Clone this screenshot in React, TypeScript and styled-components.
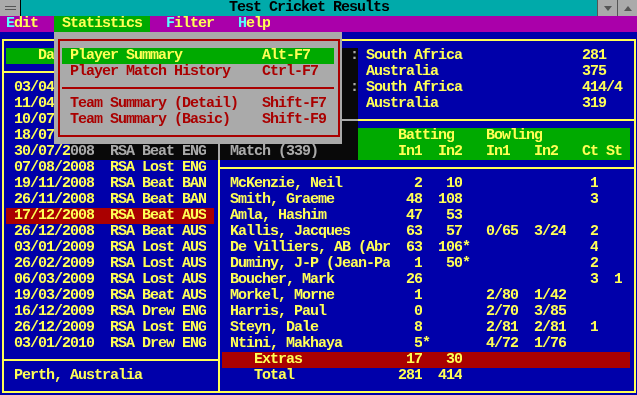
import React from "react";
import styled, { createGlobalStyle } from "styled-components";

const CW = 8;
const CH = 16;

const C = {
  blue: "#0000aa",
  yellow: "#ffff55",
  green: "#00aa00",
  red: "#aa0000",
  magenta: "#aa00aa",
  cyan: "#00aaaa",
  lcyan: "#55ffff",
  gray: "#aaaaaa",
  dark: "#555555",
};

const Global = createGlobalStyle`
  html, body { margin: 0; padding: 0; background: ${C.blue}; overflow: hidden; }
  * { box-sizing: border-box; }
`;

const Window = styled.div`
  position: relative;
  width: 637px;
  height: 395px;
  overflow: hidden;
  background: ${C.blue};
  font-family: "Liberation Mono", "DejaVu Sans Mono", monospace;
  font-size: 15px;
  font-weight: bold;
  letter-spacing: -1px;
  line-height: ${CH}px;
  color: ${C.yellow};
`;

const TitleBar = styled.div`
  display: flex;
  height: 16px;
  background: ${C.cyan};
`;

const ControlBox = styled.div`
  width: 21px;
  display: flex;
  align-items: center;
  justify-content: center;
  background: ${C.gray};
  border-right: 1px solid #000;
`;

const ControlBar = styled.div`
  width: 11px;
  height: 4px;
  border-top: 1px solid ${C.dark};
  border-bottom: 1px solid ${C.dark};
`;

const Title = styled.div`
  flex: 1;
  text-align: center;
  color: #000;
  white-space: pre;
`;

const SizeButton = styled.div`
  width: 20px;
  display: flex;
  align-items: center;
  justify-content: center;
  background: ${C.gray};
  border-left: 1px solid ${C.dark};
`;

const Arrow = styled.div<{ $up?: boolean }>`
  width: 0;
  height: 0;
  border-left: 4px solid transparent;
  border-right: 4px solid transparent;
  ${(p) =>
    p.$up
      ? `border-bottom: 5px solid ${C.dark};`
      : `border-top: 5px solid ${C.dark};`}
`;

const Screen = styled.div`
  position: relative;
  width: 640px;
  margin-left: -2px;
`;

const Cols = styled.div<{ $n: number }>`
  display: grid;
  grid-template-columns: repeat(${(p) => p.$n}, ${CW}px);
  grid-auto-rows: ${CH}px;
  height: ${CH}px;
`;

const Cell = styled.span<{ $c: number; $s?: number; $r?: boolean; $row?: number }>`
  grid-column: ${(p) => p.$c} / span ${(p) => p.$s ?? 1};
  ${(p) => (p.$row ? `grid-row: ${p.$row};` : "")}
  text-align: ${(p) => (p.$r ? "right" : "left")};
  white-space: pre;
  overflow: hidden;
`;

const MenuBar = styled(Cols)`
  background: ${C.magenta};
`;

const MenuTitle = styled(Cell)<{ $active?: boolean }>`
  background: ${(p) => (p.$active ? C.green : "transparent")};
`;

const Hot = styled.span`
  color: ${C.lcyan};
`;

const Body = styled.div`
  height: 368px;
  padding: 7px 0 0 4px;
  background: ${C.blue};
`;

const Frame = styled.div`
  display: flex;
  width: 634px;
  height: 354px;
  border: 2px solid ${C.yellow};
`;

const Panel = styled.div`
  display: flex;
  flex-direction: column;
  padding: 7px 4px 7px 2px;
`;

const LeftPanel = styled(Panel)`
  width: 216px;
  border-right: 2px solid ${C.yellow};
`;

const RightPanel = styled(Panel)`
  flex: 1;
`;

const Rule = styled.div<{ $color: string; $bleed?: boolean }>`
  height: ${CH}px;
  margin: ${(p) => (p.$bleed ? "0 -4px 0 -2px" : "0")};
  background: linear-gradient(${(p) => p.$color}, ${(p) => p.$color}) 0 7px / 100% 2px no-repeat;
`;

const ListHeader = styled(Cols)`
  background: ${C.green};
`;

const ListRow = styled(Cols)<{ $sel?: boolean }>`
  background: ${(p) => (p.$sel ? C.red : "transparent")};
`;

const ScoreHeader = styled(Cols)`
  height: 32px;
  grid-template-rows: 16px 16px;
`;

const GreenBlock = styled.div`
  grid-column: 18 / span 34;
  grid-row: 1 / span 2;
  background: ${C.green};
`;

const TotalRow = styled(Cols)<{ $hi?: boolean }>`
  background: ${(p) => (p.$hi ? C.red : "transparent")};
`;

const Popup = styled.div`
  position: absolute;
  left: 56px;
  top: 16px;
  width: 288px;
  height: 112px;
  padding: 7px 0 0 4px;
  background: ${C.gray};
  z-index: 3;
`;

const PopupFrame = styled.div`
  display: flex;
  flex-direction: column;
  width: 282px;
  height: 98px;
  padding: 7px 4px 7px 2px;
  border: 2px solid ${C.red};
`;

const Entry = styled(Cols)<{ $active?: boolean }>`
  background: ${(p) => (p.$active ? C.green : "transparent")};
  color: ${(p) => (p.$active ? C.yellow : C.red)};
`;

const Shadow = styled.div<{ $x: number; $y: number; $w: number; $h: number }>`
  position: absolute;
  left: ${(p) => p.$x * CW}px;
  top: ${(p) => p.$y * CH}px;
  width: ${(p) => p.$w * CW}px;
  height: ${(p) => p.$h * CH}px;
  backdrop-filter: grayscale(1) brightness(0.7);
  -webkit-backdrop-filter: grayscale(1) brightness(0.7);
  z-index: 2;
`;

// rows 5-8 sit under the Statistics menu, only the start of the date shows
const matches = [
  ["03/04/2008", "RSA Beat IND"],
  ["11/04/2008", "RSA Lost IND"],
  ["10/07/2008", "RSA Drew ENG"],
  ["18/07/2008", "RSA Beat ENG"],
  ["30/07/2008", "RSA Beat ENG"],
  ["07/08/2008", "RSA Lost ENG"],
  ["19/11/2008", "RSA Beat BAN"],
  ["26/11/2008", "RSA Beat BAN"],
  ["17/12/2008", "RSA Beat AUS"],
  ["26/12/2008", "RSA Beat AUS"],
  ["03/01/2009", "RSA Lost AUS"],
  ["26/02/2009", "RSA Lost AUS"],
  ["06/03/2009", "RSA Lost AUS"],
  ["19/03/2009", "RSA Beat AUS"],
  ["16/12/2009", "RSA Drew ENG"],
  ["26/12/2009", "RSA Lost ENG"],
  ["03/01/2010", "RSA Drew ENG"],
];

const innings = [
  [":", "South Africa", "281"],
  ["", "Australia", "375"],
  [":", "South Africa", "414/4"],
  ["", "Australia", "319"],
];

type Player = {
  name: string;
  in1: string;
  m1?: string;
  in2?: string;
  m2?: string;
  b1?: string;
  b2?: string;
  ct?: string;
  st?: string;
};

const players: Player[] = [
  { name: "McKenzie, Neil", in1: "2", in2: "10", ct: "1" },
  { name: "Smith, Graeme", in1: "48", in2: "108", ct: "3" },
  { name: "Amla, Hashim", in1: "47", in2: "53" },
  { name: "Kallis, Jacques", in1: "63", in2: "57", b1: "0/65", b2: "3/24", ct: "2" },
  { name: "De Villiers, AB (Abr", in1: "63", in2: "106", m2: "*", ct: "4" },
  { name: "Duminy, J-P (Jean-Pa", in1: "1", in2: "50", m2: "*", ct: "2" },
  { name: "Boucher, Mark", in1: "26", ct: "3", st: "1" },
  { name: "Morkel, Morne", in1: "1", b1: "2/80", b2: "1/42" },
  { name: "Harris, Paul", in1: "0", b1: "2/70", b2: "3/85" },
  { name: "Steyn, Dale", in1: "8", b1: "2/81", b2: "2/81", ct: "1" },
  { name: "Ntini, Makhaya", in1: "5", m1: "*", b1: "4/72", b2: "1/76" },
];

const entries = [
  ["Player Summary", "Alt-F7"],
  ["Player Match History", "Ctrl-F7"],
  null,
  ["Team Summary (Detail)", "Shift-F7"],
  ["Team Summary (Basic)", "Shift-F9"],
];

const hidden = (d: string) => ["03/04/2008", "11/04/2008", "10/07/2008", "18/07/2008"].includes(d);

export default function App() {
  return (
    <>
      <Global />
      <Window>
        <TitleBar>
          <ControlBox>
            <ControlBar />
          </ControlBox>
          <Title>Test Cricket Results</Title>
          <SizeButton>
            <Arrow />
          </SizeButton>
          <SizeButton>
            <Arrow $up />
          </SizeButton>
        </TitleBar>
        <Screen>
          <MenuBar $n={80}>
            <MenuTitle $c={2} $s={4}>
              <Hot>E</Hot>dit
            </MenuTitle>
            <MenuTitle $c={8} $s={12} $active>
              {" Statistics "}
            </MenuTitle>
            <MenuTitle $c={22} $s={6}>
              <Hot>F</Hot>ilter
            </MenuTitle>
            <MenuTitle $c={31} $s={4}>
              <Hot>H</Hot>elp
            </MenuTitle>
          </MenuBar>
          <Body>
            <Frame>
              <LeftPanel>
                <ListHeader $n={26}>
                  <Cell $c={5} $s={2}>
                    Da
                  </Cell>
                </ListHeader>
                <Rule $color={C.yellow} $bleed />
                {matches.map(([d, r]) => (
                  <ListRow $n={26} key={d} $sel={d === "17/12/2008"}>
                    {hidden(d) ? (
                      <Cell $c={2} $s={5}>
                        {d.slice(0, 5)}
                      </Cell>
                    ) : (
                      <>
                        <Cell $c={2} $s={10}>
                          {d}
                        </Cell>
                        <Cell $c={14} $s={12}>
                          {r}
                        </Cell>
                      </>
                    )}
                  </ListRow>
                ))}
                <Rule $color={C.yellow} $bleed />
                <ListRow $n={26}>
                  <Cell $c={2} $s={24}>
                    Perth, Australia
                  </Cell>
                </ListRow>
              </LeftPanel>
              <RightPanel>
                {innings.map(([label, team, score], i) => (
                  <Cols $n={51} key={i}>
                    <Cell $c={17}>{label}</Cell>
                    <Cell $c={19} $s={20}>
                      {team}
                    </Cell>
                    <Cell $c={46} $s={6}>
                      {score}
                    </Cell>
                  </Cols>
                ))}
                <Rule $color={C.yellow} $bleed />
                <ScoreHeader $n={51}>
                  <GreenBlock />
                  <Cell $c={23} $s={7} $row={1}>
                    Batting
                  </Cell>
                  <Cell $c={34} $s={7} $row={1}>
                    Bowling
                  </Cell>
                  <Cell $c={2} $s={15} $row={2}>
                    Match (339)
                  </Cell>
                  <Cell $c={23} $s={3} $row={2}>
                    In1
                  </Cell>
                  <Cell $c={28} $s={3} $row={2}>
                    In2
                  </Cell>
                  <Cell $c={34} $s={3} $row={2}>
                    In1
                  </Cell>
                  <Cell $c={40} $s={3} $row={2}>
                    In2
                  </Cell>
                  <Cell $c={46} $s={2} $row={2}>
                    Ct
                  </Cell>
                  <Cell $c={49} $s={2} $row={2}>
                    St
                  </Cell>
                </ScoreHeader>
                <Rule $color={C.yellow} $bleed />
                {players.map((p) => (
                  <Cols $n={51} key={p.name}>
                    <Cell $c={2} $s={20}>
                      {p.name}
                    </Cell>
                    <Cell $c={22} $s={4} $r>
                      {p.in1}
                    </Cell>
                    <Cell $c={26}>{p.m1 ?? ""}</Cell>
                    <Cell $c={27} $s={4} $r>
                      {p.in2 ?? ""}
                    </Cell>
                    <Cell $c={31}>{p.m2 ?? ""}</Cell>
                    <Cell $c={34} $s={4}>
                      {p.b1 ?? ""}
                    </Cell>
                    <Cell $c={40} $s={4}>
                      {p.b2 ?? ""}
                    </Cell>
                    <Cell $c={47}>{p.ct ?? ""}</Cell>
                    <Cell $c={50}>{p.st ?? ""}</Cell>
                  </Cols>
                ))}
                <TotalRow $n={51} $hi>
                  <Cell $c={5} $s={10}>
                    Extras
                  </Cell>
                  <Cell $c={22} $s={4} $r>
                    17
                  </Cell>
                  <Cell $c={27} $s={4} $r>
                    30
                  </Cell>
                </TotalRow>
                <TotalRow $n={51}>
                  <Cell $c={5} $s={10}>
                    Total
                  </Cell>
                  <Cell $c={22} $s={4} $r>
                    281
                  </Cell>
                  <Cell $c={27} $s={4} $r>
                    414
                  </Cell>
                </TotalRow>
              </RightPanel>
            </Frame>
          </Body>
          <Shadow $x={43} $y={2} $w={2} $h={6} />
          <Shadow $x={9} $y={8} $w={36} $h={1} />
          <Popup>
            <PopupFrame>
              {entries.map((e, i) =>
                e ? (
                  <Entry $n={34} key={i} $active={i === 0}>
                    <Cell $c={2} $s={22}>
                      {e[0]}
                    </Cell>
                    <Cell $c={26} $s={8}>
                      {e[1]}
                    </Cell>
                  </Entry>
                ) : (
                  <Rule $color={C.red} key={i} />
                )
              )}
            </PopupFrame>
          </Popup>
        </Screen>
      </Window>
    </>
  );
}
